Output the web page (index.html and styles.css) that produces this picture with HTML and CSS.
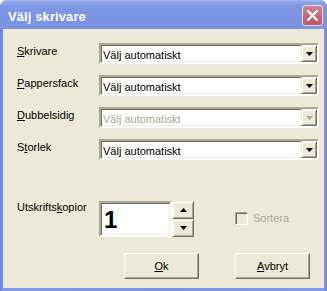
FILE: index.html
```html
<!DOCTYPE html>
<html lang="sv">
<head>
    <meta charset="UTF-8">
    <title>Välj skrivare</title>
    <link rel="stylesheet" href="styles.css">
</head>
<body>
    <div class="window">
        <div class="titlebar">
            <span class="title">Välj skrivare</span>
            <span class="close">
                <svg width="11" height="11" viewBox="0 0 11 11"><path d="M1 1L10 10M10 1L1 10" stroke="#fff" stroke-width="2.2" stroke-linecap="square"/></svg>
            </span>
        </div>
        <div class="client">
            <div class="field-row">
                <label class="field-label"><u>S</u>krivare</label>
                <div class="combo">
                    <span class="combo-text">Välj automatiskt</span>
                    <span class="combo-btn"><svg width="7" height="4" viewBox="0 0 7 4"><path d="M0 0H7L3.5 4Z" fill="#000"/></svg></span>
                </div>
            </div>
            <div class="field-row">
                <label class="field-label"><u>P</u>appersfack</label>
                <div class="combo">
                    <span class="combo-text">Välj automatiskt</span>
                    <span class="combo-btn"><svg width="7" height="4" viewBox="0 0 7 4"><path d="M0 0H7L3.5 4Z" fill="#000"/></svg></span>
                </div>
            </div>
            <div class="field-row">
                <label class="field-label"><u>D</u>ubbelsidig</label>
                <div class="combo disabled">
                    <span class="combo-text">Välj automatiskt</span>
                    <span class="combo-btn"><svg width="7" height="4" viewBox="0 0 7 4"><path d="M0 0H7L3.5 4Z" fill="#aca899"/></svg></span>
                </div>
            </div>
            <div class="field-row">
                <label class="field-label">S<u>t</u>orlek</label>
                <div class="combo">
                    <span class="combo-text">Välj automatiskt</span>
                    <span class="combo-btn"><svg width="7" height="4" viewBox="0 0 7 4"><path d="M0 0H7L3.5 4Z" fill="#000"/></svg></span>
                </div>
            </div>

            <div class="copies-row">
                <label class="field-label copies-label">Utskrifts<u>k</u>opior</label>
                <div class="spin-edit">1</div>
                <div class="spin-btns">
                    <span class="spin-btn"><svg width="7" height="4" viewBox="0 0 7 4"><path d="M0 4H7L3.5 0Z" fill="#000"/></svg></span>
                    <span class="spin-btn"><svg width="7" height="4" viewBox="0 0 7 4"><path d="M0 0H7L3.5 4Z" fill="#000"/></svg></span>
                </div>
                <label class="check disabled"><span class="check-box"></span>Sortera</label>
            </div>

            <div class="button-row">
                <button class="push"><u>O</u>k</button>
                <button class="push"><u>A</u>vbryt</button>
            </div>
        </div>
    </div>
</body>
</html>
```

FILE: styles.css
```css
* {
    box-sizing: border-box;
}
body {
    margin: 0;
    font-family: "Liberation Sans", Arial, sans-serif;
    font-size: 11px;
    color: #000;
}
.window {
    width: 327px;
    height: 291px;
    display: flex;
    flex-direction: column;
    border-radius: 7px 7px 0 0;
    overflow: hidden;
    background: linear-gradient(to right, #6b80dd, #8599e6 3px, #7d92e2 50%, #8599e6 324px, #6b80dd);
}
.titlebar {
    height: 29px;
    flex-shrink: 0;
    display: flex;
    align-items: flex-start;
    padding: 5px 4px 0 8px;
    background: linear-gradient(to bottom, #aabcf2 0, #8ea4ea 2px, #7e97e4 6px, #7a93e2 22px, #7d95e3 29px);
}
.title {
    margin-top: 4px;
    color: #fff;
    font-size: 13px;
    font-weight: bold;
    letter-spacing: 0.1px;
}
.close {
    margin-left: auto;
    width: 21px;
    height: 21px;
    display: flex;
    align-items: center;
    justify-content: center;
    border: 1px solid #e9dce6;
    border-radius: 3px;
    background: linear-gradient(to bottom, #cf8592, #c06873 60%, #b65c68);
}
.client {
    flex: 1;
    margin: 0 3px 3px;
    padding: 14px 5px 0 14px;
    background: #ece9d8;
    display: flex;
    flex-direction: column;
}
.field-row {
    display: flex;
    align-items: flex-start;
    height: 21px;
    margin-bottom: 11px;
}
.field-label {
    width: 82px;
    flex-shrink: 0;
    padding-top: 2px;
    line-height: 13px;
}
.combo {
    width: 220px;
    height: 21px;
    display: flex;
    background: #fff;
    border: 2px solid;
    border-color: #aca899 #fff #fff #aca899;
    box-shadow: inset 1px 1px 0 #716f64, inset -1px -1px 0 #f1efe2;
}
.combo-text {
    flex: 1;
    padding: 4px 0 0 2px;
    line-height: 13px;
}
.combo.disabled .combo-text {
    color: #aca899;
}
.combo-btn,
.spin-btn {
    display: flex;
    align-items: center;
    justify-content: center;
    background: #ece9d8;
    border: 1px solid;
    border-color: #f1efe2 #716f64 #716f64 #f1efe2;
    box-shadow: inset 1px 1px 0 #fff, inset -1px -1px 0 #aca899;
}
.combo-btn {
    width: 16px;
    height: 17px;
}
.copies-row {
    display: flex;
    align-items: flex-start;
    margin-top: 30px;
    height: 36px;
}
.copies-label {
    padding-top: 0;
}
.spin-edit {
    width: 73px;
    height: 36px;
    padding: 5px 0 0 3px;
    background: #fff;
    border: 2px solid;
    border-color: #aca899 #fff #fff #aca899;
    box-shadow: inset 1px 1px 0 #716f64, inset -1px -1px 0 #f1efe2;
    font-size: 24px;
    font-weight: bold;
    line-height: 24px;
}
.spin-btns {
    display: flex;
    flex-direction: column;
    gap: 0;
}
.spin-btn {
    width: 22px;
    height: 18px;
}
.check {
    display: flex;
    align-items: center;
    gap: 5px;
    margin: 11px 0 0 41px;
    line-height: 13px;
}
.check.disabled {
    color: #aca899;
}
.check-box {
    width: 13px;
    height: 13px;
    border: 1px solid;
    border-color: #aca899 #fff #fff #aca899;
    box-shadow: inset 1px 1px 0 #716f64, inset -1px -1px 0 #f1efe2;
    background: #ece9d8;
}
.button-row {
    display: flex;
    justify-content: flex-end;
    gap: 36px;
    margin-top: 16px;
    padding-right: 9px;
}
.push {
    width: 75px;
    height: 26px;
    padding: 0;
    font: inherit;
    color: #000;
    background: #ece9d8;
    border: 1px solid;
    border-color: #fff #716f64 #716f64 #fff;
    box-shadow: inset -1px -1px 0 #aca899;
    border-radius: 0;
}
```
